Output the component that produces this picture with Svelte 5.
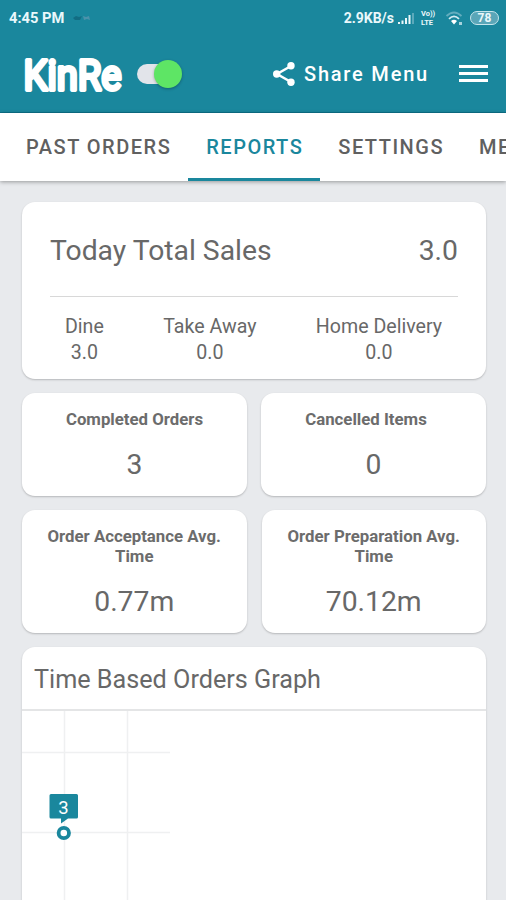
<script>
	let online = true;
	let activeTab = 'REPORTS';

	const tabs = ['PAST ORDERS', 'REPORTS', 'SETTINGS', 'MENU'];
	const sales = [
		{ name: 'Dine', value: '3.0' },
		{ name: 'Take Away', value: '0.0' },
		{ name: 'Home Delivery', value: '0.0' }
	];
	const orderStats = [
		{ name: 'Completed Orders', value: '3' },
		{ name: 'Cancelled Items', value: '0' }
	];
	const timeStats = [
		{ name: 'Order Acceptance Avg. Time', value: '0.77m' },
		{ name: 'Order Preparation Avg. Time', value: '70.12m' }
	];
</script>

<div class="screen">
	<header>
		<div class="status">
			<span class="clock">4:45 PM</span>
			<svg class="faint" width="20" height="10" viewBox="0 0 20 10">
				<path d="M1 5l3-2 3 1 3-1-2 4H3z" fill="#126d83" />
				<path d="M11 3l3 1 3-1 1 4-3-1-3 1z" fill="#4b92aa" />
			</svg>
			<span class="speed">2.9KB/s</span>
			<svg class="signal" width="19" height="13" viewBox="0 0 19 13">
				<path d="M1 10h2v2H1zM4.500 8.500h2V12h-2zM8 6h2v6H8zM11.500 3h2v9h-2z" fill="#e9f7fa" />
				<path d="M15 1h2v11h-2z" fill="#5ba9bb" />
			</svg>
			<span class="volte"><span>Vo))</span><span>LTE</span></span>
			<svg class="wifi" width="20" height="15" viewBox="0 0 20 15" fill="none" stroke-width="1.800">
				<path d="M1.500 5Q9 -2 16.500 5" stroke="#63adbe" />
				<path d="M4 7.800Q9 3 14 7.800" stroke="#d4edf3" />
				<path d="M6 10q3-2.500 6 0L9 13.500z" fill="#fff" />
				<path d="M14 11h3v3h-3z" fill="#a7d3dd" />
			</svg>
			<span class="battery">78</span>
		</div>
		<div class="bar">
			<svg class="logo" width="102" height="52" viewBox="0 0 102 52">
				<text x="1.500" y="41.500" textLength="98" lengthAdjust="spacingAndGlyphs">KinRe</text>
			</svg>
			<button class="switch" class:online aria-label="Online" on:click={() => (online = !online)}>
				<span class="thumb"></span>
			</button>
			<div class="share">
				<svg width="24" height="26" viewBox="0 0 24 26">
					<path d="M19 5L5 13l14 8" fill="none" stroke="#fff" stroke-width="2.500" />
					<circle cx="19" cy="4.700" r="3.700" fill="#fff" />
					<circle cx="4.700" cy="13" r="3.700" fill="#fff" />
					<circle cx="19" cy="21.300" r="3.700" fill="#fff" />
				</svg>
				<span>Share Menu</span>
			</div>
			<div class="burger"><i></i><i></i><i></i></div>
		</div>
	</header>

	<nav>
		{#each tabs as tab}
			<button class="tab" class:active={tab === activeTab} on:click={() => (activeTab = tab)}>{tab}</button>
		{/each}
	</nav>

	<main>
		<section class="card total">
			<div class="headline">
				<span>Today Total Sales</span>
				<span>3.0</span>
			</div>
			<div class="split">
				{#each sales as row}
					<div>{row.name}<br />{row.value}</div>
				{/each}
			</div>
		</section>

		<div class="pair orders">
			{#each orderStats as stat}
				<section class="card stat">
					<h3>{stat.name}</h3>
					<p>{stat.value}</p>
				</section>
			{/each}
		</div>

		<div class="pair times">
			{#each timeStats as stat}
				<section class="card stat">
					<h3>{stat.name}</h3>
					<p>{stat.value}</p>
				</section>
			{/each}
		</div>

		<section class="card graph">
			<h2>Time Based Orders Graph</h2>
			<svg width="464" height="220" viewBox="0 0 464 220">
				<path class="grid" d="M42.500 0v220M105.500 0v220M0 41.500h148M0 121.500h148" />
				<path
					d="M29 83h25.500q1.500 0 1.500 1.500v21.500q0 1.500-1.500 1.500H46l-7 5v-5H29q-1.500 0-1.500-1.500V84.500q0-1.500 1.500-1.500z"
					fill="#1a879d"
				/>
				<text x="41.500" y="102.500" text-anchor="middle">3</text>
				<circle cx="41.800" cy="122" r="5.200" fill="#fff" stroke="#1a879d" stroke-width="3.800" />
			</svg>
		</section>
	</main>
</div>

<style>
	:global(body) {
		margin: 0;
	}

	.screen {
		display: flex;
		flex-direction: column;
		width: 506px;
		height: 900px;
		overflow: hidden;
		background: #e8eaed;
		color: #686868;
		font-family: Roboto, sans-serif;
	}

	button {
		border: 0;
		padding: 0;
		font: inherit;
	}

	header {
		flex: none;
		height: 113px;
		box-sizing: border-box;
		border-bottom: 1px solid #0d7189;
		background: #1a879d;
		color: #fff;
	}

	.status {
		display: flex;
		align-items: center;
		height: 36px;
		padding: 0 7px 0 9px;
		font-size: 14.7px;
		font-weight: 700;
		color: #eaf8fb;
	}

	.faint {
		margin-left: 8px;
	}

	.speed {
		margin-left: auto;
		font-size: 14px;
	}

	.signal {
		margin-left: 3px;
	}

	.volte {
		display: flex;
		flex-direction: column;
		width: 17px;
		margin-left: 5px;
		font-size: 7.5px;
		line-height: 9px;
	}

	.wifi {
		margin-left: 7px;
	}

	.battery {
		width: 27px;
		height: 12px;
		margin-left: 5px;
		border: 1.5px solid #c5e5ec;
		border-radius: 8px;
		background: #5aa6b8;
		font-size: 12px;
		line-height: 12px;
		text-align: center;
	}

	.bar {
		display: flex;
		align-items: center;
		height: 76px;
		padding: 0 18px 0 22px;
	}

	.logo text {
		fill: #fff;
		stroke: #fff;
		stroke-width: 3.8px;
		stroke-linejoin: round;
		font: 400 42px Roboto, sans-serif;
	}

	.switch {
		display: flex;
		align-items: center;
		width: 43px;
		height: 20px;
		margin-left: 13px;
		border-radius: 10px;
		background: #e2e4ea;
	}

	.thumb {
		width: 28px;
		height: 28px;
		border-radius: 50%;
		background: #fff;
		box-shadow: 0 1px 3px rgba(0, 0, 0, 0.3);
	}

	.switch.online .thumb {
		margin-left: 17px;
		flex: none;
		background: #5ee565;
	}

	.share {
		display: flex;
		align-items: center;
		gap: 8px;
		margin-left: auto;
		font-size: 20px;
		font-weight: 500;
		letter-spacing: 1.8px;
	}

	.burger {
		display: flex;
		flex-direction: column;
		gap: 4px;
		width: 29px;
		margin: -2px 0 0 30px;
	}

	.burger i {
		height: 3px;
		background: #fff;
	}

	nav {
		display: flex;
		flex: none;
		height: 68px;
		padding-left: 8px;
		background: #fff;
		box-shadow: 0 1px 4px rgba(0, 0, 0, 0.35);
		z-index: 1;
	}

	.tab {
		flex: none;
		box-sizing: border-box;
		padding: 3px 17px 0 18px;
		border-bottom: 3px solid transparent;
		background: none;
		color: #606060;
		font-size: 20px;
		font-weight: 500;
		letter-spacing: 1.5px;
		white-space: nowrap;
	}

	.tab.active {
		border-color: #1a879d;
		color: #1a879d;
	}

	main {
		display: flex;
		flex-direction: column;
		gap: 14px;
		padding: 21px 20px 0 22px;
	}

	.card {
		border-radius: 13px;
		background: #fff;
		box-shadow: 0 1px 2px rgba(0, 0, 0, 0.22);
	}

	.total {
		height: 177px;
		box-sizing: border-box;
		padding: 0 28px;
	}

	.headline {
		display: flex;
		justify-content: space-between;
		height: 94px;
		border-bottom: 1px solid #d8d8d8;
		font-size: 28.3px;
		line-height: 97px;
	}

	.split {
		display: flex;
		justify-content: space-between;
		padding: 17px 16px 0 15px;
		font-size: 19.6px;
		line-height: 26px;
		text-align: center;
	}

	.pair {
		display: flex;
		gap: 14px;
		height: 103px;
	}

	.times {
		gap: 15px;
		height: 123px;
	}

	.stat {
		flex: 1;
		display: flex;
		flex-direction: column;
		align-items: center;
		justify-content: space-between;
		box-sizing: border-box;
		padding: 16px 22px 14px;
		text-align: center;
	}

	h3 {
		margin: 0;
		font-size: 16.8px;
		font-weight: 700;
		line-height: 20px;
		color: #6c6c6c;
	}

	.orders .stat:last-child h3 {
		margin-right: 15px;
	}

	.stat p {
		margin: 0;
		font-size: 28.3px;
		line-height: 34px;
	}

	.graph h2 {
		margin: 0;
		height: 62px;
		padding-left: 12px;
		border-bottom: 2px solid #e4e5e6;
		font-size: 25.2px;
		font-weight: 400;
		line-height: 65px;
	}

	.graph svg {
		display: block;
	}

	.grid {
		stroke: #eff0f1;
		stroke-width: 1.5;
	}

	.graph text {
		fill: #fff;
		font: 400 18.5px Roboto, sans-serif;
	}
</style>
